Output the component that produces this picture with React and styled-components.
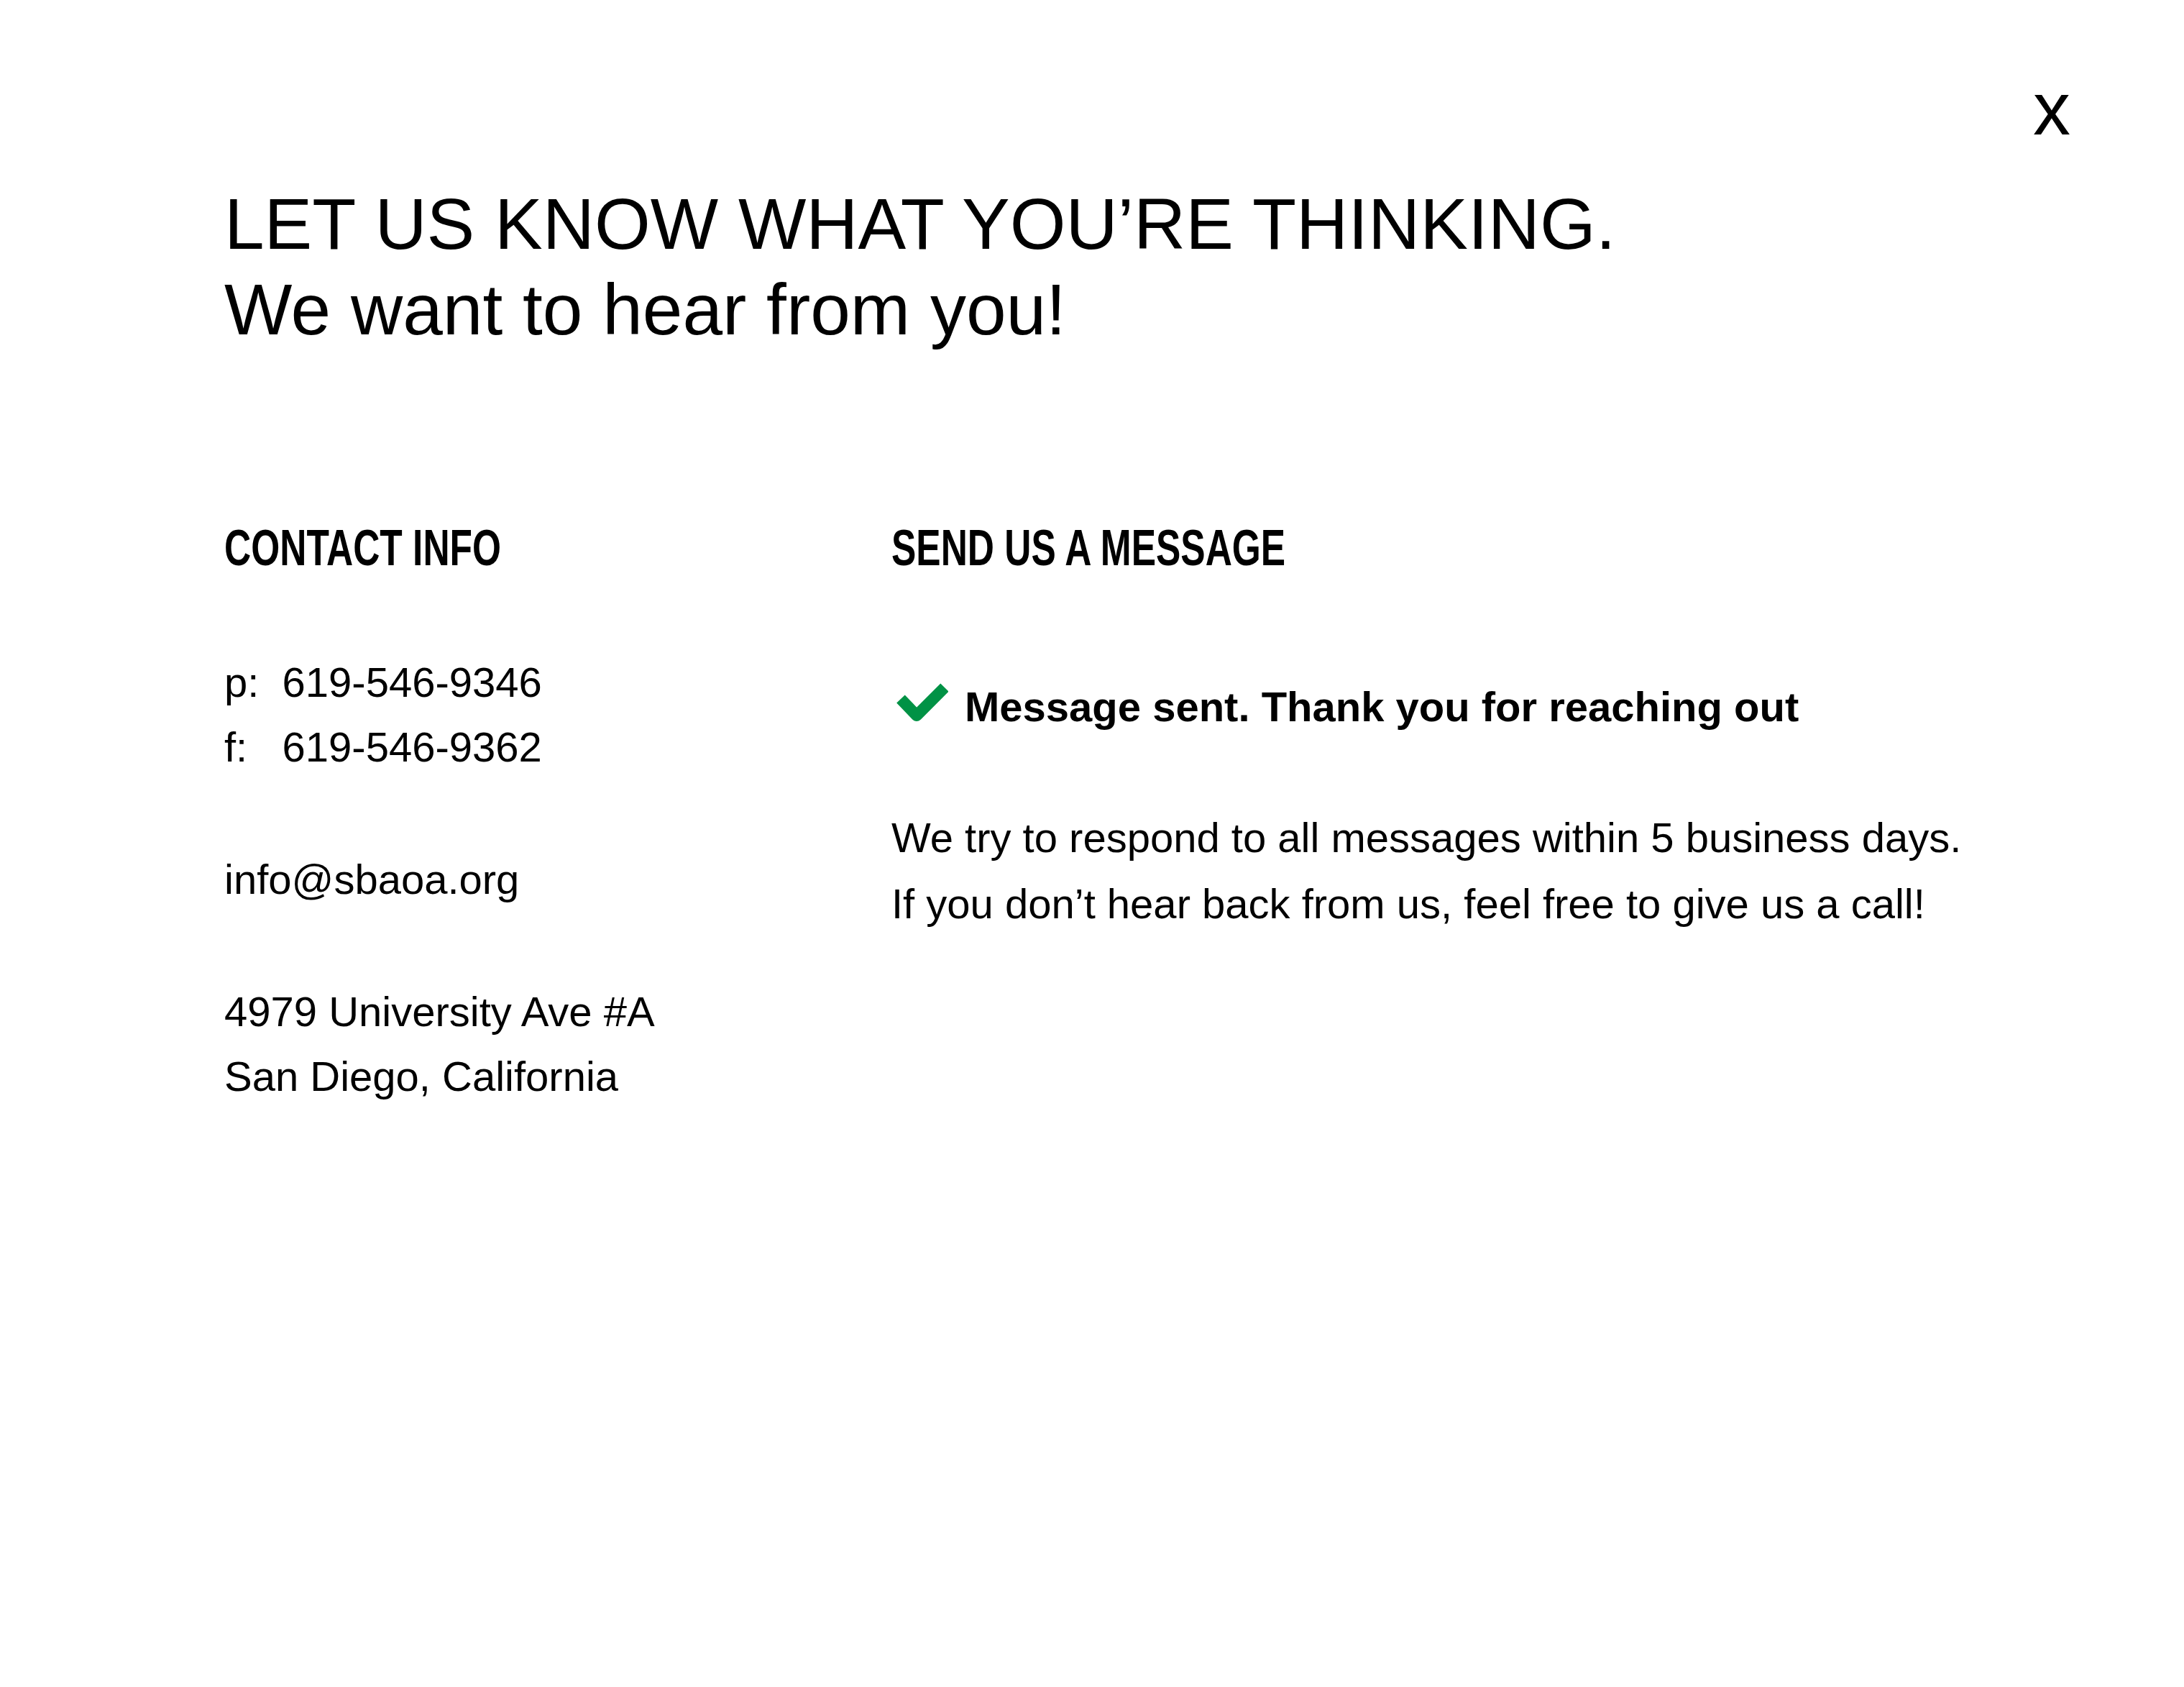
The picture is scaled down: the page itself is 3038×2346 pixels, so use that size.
import React from "react";
import styled, { createGlobalStyle } from "styled-components";

const GlobalStyle = createGlobalStyle`
  html, body {
    margin: 0;
    padding: 0;
    background: #ffffff;
  }
  body {
    font-family: "Liberation Sans", Arial, Helvetica, sans-serif;
    color: #000000;
  }
`;

const Page = styled.main`
  position: relative;
  box-sizing: border-box;
  min-height: 100vh;
  padding: 252px 0 0 312px;
  background: #ffffff;
`;

const CloseButton = styled.button`
  position: absolute;
  top: 99px;
  right: 158px;
  margin: 0;
  padding: 0;
  border: 0;
  background: transparent;
  font-family: "Liberation Sans", Arial, sans-serif;
  font-size: 104px;
  line-height: 1;
  font-weight: 400;
  color: #000;
  cursor: pointer;
`;

const Title = styled.h1`
  margin: 0;
  font-size: 100px;
  line-height: 119px;
  font-weight: 400;
  letter-spacing: 0;
`;

const TitleLine = styled.span`
  display: block;
  text-transform: ${(p) => (p.$upper ? "uppercase" : "none")};
`;

const Columns = styled.section`
  display: grid;
  grid-template-columns: 928px 1fr;
  margin-top: 229px;
`;

const Column = styled.div`
  display: flex;
  flex-direction: column;
  align-items: flex-start;
`;

const Heading = styled.h2`
  margin: 0;
  font-family: "Liberation Sans", Arial, sans-serif;
  font-size: 71px;
  line-height: 85px;
  font-weight: 700;
  text-transform: uppercase;
  letter-spacing: 0;
  white-space: nowrap;
  transform: scaleX(0.725);
  transform-origin: left center;
`;

const InfoBlock = styled.p`
  margin: ${(p) => p.$gap}px 0 0 0;
  font-size: 58px;
  line-height: 90px;
  font-weight: 400;
`;

const InfoLine = styled.span`
  display: block;
  white-space: pre;
`;

const Status = styled.div`
  display: flex;
  align-items: flex-start;
  gap: 23px;
  margin-top: 134px;
  font-size: 58px;
  line-height: 90px;
  font-weight: 700;
`;

const CheckIcon = styled.svg`
  flex: none;
  width: 72px;
  height: 55px;
  margin: 12px 0 0 7px;
`;

const Body = styled.p`
  margin: 91px 0 0 0;
  font-size: 58px;
  line-height: 92px;
  font-weight: 400;
`;

const BodyLine = styled.span`
  display: block;
`;

export default function App() {
  return (
    <>
      <GlobalStyle />
      <Page>
        <CloseButton aria-label="Close">x</CloseButton>
        <Title>
          <TitleLine $upper>LET US KNOW WHAT YOU’RE THINKING.</TitleLine>
          <TitleLine>We want to hear from you!</TitleLine>
        </Title>
        <Columns>
          <Column>
            <Heading>Contact Info</Heading>
            <InfoBlock $gap={100}>
              <InfoLine>{"p:  619-546-9346"}</InfoLine>
              <InfoLine>{"f:   619-546-9362"}</InfoLine>
            </InfoBlock>
            <InfoBlock $gap={94}>
              <InfoLine>info@sbaoa.org</InfoLine>
            </InfoBlock>
            <InfoBlock $gap={94}>
              <InfoLine>4979 University Ave #A</InfoLine>
              <InfoLine>San Diego, California</InfoLine>
            </InfoBlock>
          </Column>
          <Column>
            <Heading>Send us a message</Heading>
            <Status>
              <CheckIcon viewBox="0 0 72 55" aria-hidden="true">
                <path
                  d="M11.5 27.8 L28 45 L61.3 11.7"
                  fill="none"
                  stroke="#009245"
                  strokeWidth="16"
                  strokeLinecap="square"
                  strokeLinejoin="round"
                />
              </CheckIcon>
              <span>Message sent. Thank you for reaching out</span>
            </Status>
            <Body>
              <BodyLine>We try to respond to all messages within 5 business days.</BodyLine>
              <BodyLine>If you don’t hear back from us, feel free to give us a call!</BodyLine>
            </Body>
          </Column>
        </Columns>
      </Page>
    </>
  );
}
